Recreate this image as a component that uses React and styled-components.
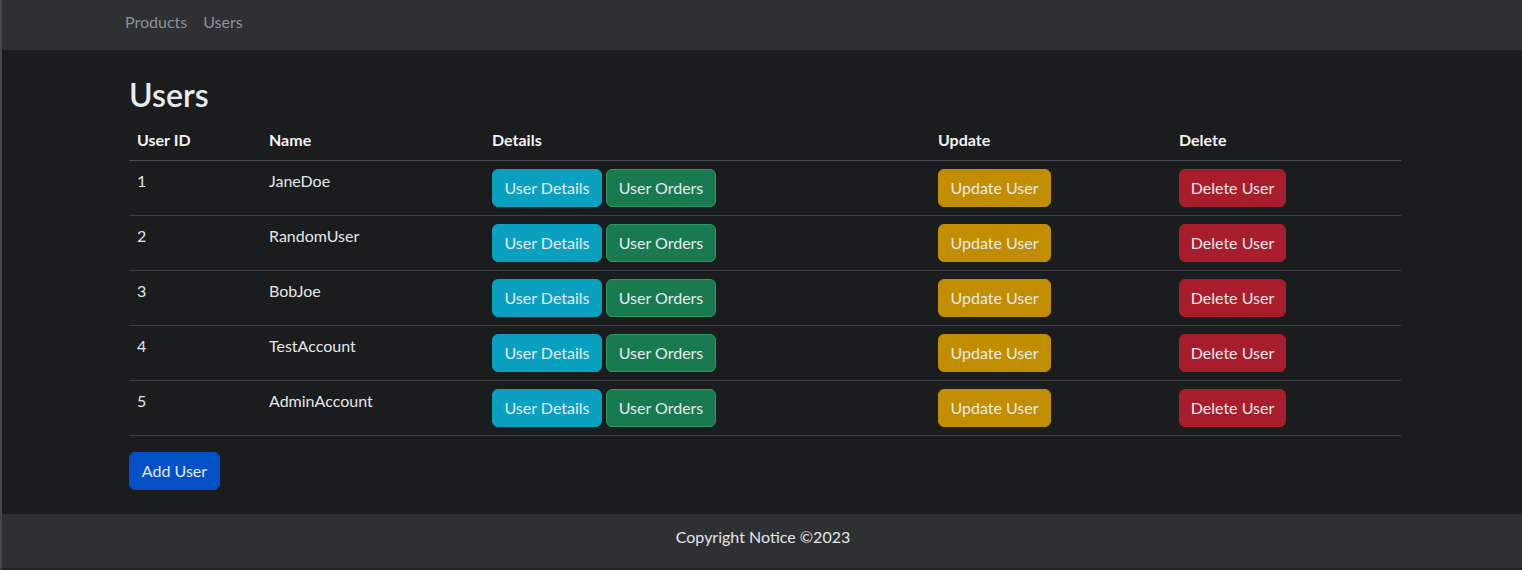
import React from 'react'
import styled, { createGlobalStyle } from 'styled-components'

const GlobalStyle = createGlobalStyle`
  html, body {
    margin: 0;
    padding: 0;
    background: #1b1c1e;
    font-family: Lato, "Liberation Sans", sans-serif;
    color: #dee2e6;
  }
`

const Frame = styled.div`
  width: 1522px;
  height: 570px;
  box-sizing: border-box;
  border-left: 2px solid #45484b;
  border-bottom: 2px solid #202224;
  display: flex;
  flex-direction: column;
  overflow: hidden;
`

const Navbar = styled.nav`
  height: 50px;
  background: #2e3134;
  display: flex;
  align-items: center;
  padding-left: 115px;
  flex-shrink: 0;
`

const NavLink = styled.a`
  color: #8d9094;
  font-size: 16px;
  padding: 0 8px;
  text-decoration: none;
  line-height: 24px;
  margin-top: -6px;
`

const Main = styled.main`
  flex: 1;
  padding: 26px 0 24px 127px;
  width: 1272px;
`

const Title = styled.h2`
  margin: 0 0 6px;
  font-size: 32px;
  line-height: 38.4px;
  font-weight: 600;
  color: #e9ecef;
`

const Table = styled.table`
  width: 1272px;
  border-collapse: collapse;
  margin-bottom: 16px;
  table-layout: fixed;
`

const Th = styled.th`
  text-align: left;
  font-weight: 700;
  font-size: 16px;
  line-height: 24px;
  padding: 8px;
  color: #f1f3f5;
  border-bottom: 1px solid #4a4d50;
  width: ${p => p.$w}px;
`

const Td = styled.td`
  font-size: 16px;
  line-height: 24px;
  padding: 8px;
  vertical-align: top;
  border-bottom: 1px solid #3d4043;
  color: #e3e6e9;
`

const Buttons = styled.div`
  display: flex;
  gap: 4px;
`

const colors = {
  info: ['#0aa1c0', '#0aa1c0'],
  success: ['#197a4f', '#2b9a63'],
  warning: ['#c08e00', '#c08e00'],
  danger: ['#a81d2b', '#a81d2b'],
  primary: ['#0450c7', '#0450c7'],
}

const Button = styled.button`
  height: 38px;
  width: ${p => p.$w}px;
  padding: 0;
  font-family: inherit;
  font-size: 16px;
  line-height: 24px;
  white-space: nowrap;
  border-radius: 6px;
  border: 1px solid ${p => colors[p.$kind][1]};
  background: ${p => colors[p.$kind][0]};
  color: #e6eaee;
  cursor: pointer;
`

const Footer = styled.footer`
  height: 54px;
  box-sizing: border-box;
  padding: 11px 0 0 2px;
  background: #2e3134;
  text-align: center;
  font-size: 16px;
  line-height: 24px;
  color: #e3e6e9;
  flex-shrink: 0;
`

const users = [
  { id: 1, name: 'JaneDoe' },
  { id: 2, name: 'RandomUser' },
  { id: 3, name: 'BobJoe' },
  { id: 4, name: 'TestAccount' },
  { id: 5, name: 'AdminAccount' },
]

export default function App() {
  return (
    <Frame>
      <GlobalStyle />
      <Navbar>
        <NavLink href="#">Products</NavLink>
        <NavLink href="#">Users</NavLink>
      </Navbar>
      <Main>
        <Title>Users</Title>
        <Table>
          <thead>
            <tr>
              <Th $w={116}>User ID</Th>
              <Th $w={207}>Name</Th>
              <Th $w={430}>Details</Th>
              <Th $w={225}>Update</Th>
              <Th $w={214}>Delete</Th>
            </tr>
          </thead>
          <tbody>
            {users.map(u => (
              <tr key={u.id}>
                <Td>{u.id}</Td>
                <Td>{u.name}</Td>
                <Td>
                  <Buttons>
                    <Button $kind="info" $w={110}>User Details</Button>
                    <Button $kind="success" $w={110}>User Orders</Button>
                  </Buttons>
                </Td>
                <Td>
                  <Button $kind="warning" $w={113}>Update User</Button>
                </Td>
                <Td>
                  <Button $kind="danger" $w={107}>Delete User</Button>
                </Td>
              </tr>
            ))}
          </tbody>
        </Table>
        <Button $kind="primary" $w={91}>Add User</Button>
      </Main>
      <Footer>Copyright Notice ©2023</Footer>
    </Frame>
  )
}
